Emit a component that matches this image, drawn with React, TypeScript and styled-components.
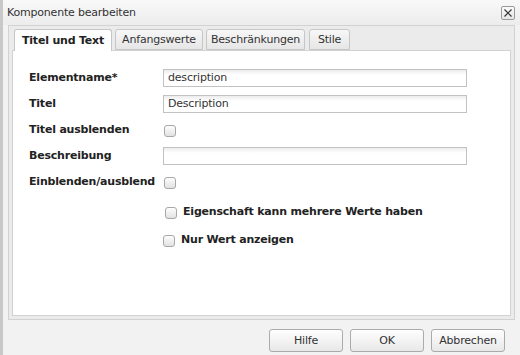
import React from "react";
import styled, { createGlobalStyle } from "styled-components";

const Global = createGlobalStyle`
  html, body { margin: 0; padding: 0; background: #f2f2f2; }
  body { font-family: "DejaVu Sans", Verdana, sans-serif; font-size: 11px; letter-spacing: -0.2px; color: #333; }
`;

const Window = styled.div`
  width: 520px;
  height: 355px;
  box-sizing: border-box;
  border-left: 3px solid #c8c8c8;
  background: #f2f2f2;
  display: flex;
  flex-direction: column;
  overflow: hidden;
`;

const TitleBar = styled.div`
  height: 25px;
  flex: none;
  display: flex;
  align-items: center;
  justify-content: space-between;
  padding: 0 5px 1px 4px;
  box-sizing: border-box;
  background: linear-gradient(#f9f9f9, #ececec);
`;

const Title = styled.span`
  font-size: 11px;
  color: #333;
`;

const CloseBtn = styled.div`
  width: 12px;
  height: 12px;
  border: 1px solid #9a9a9a;
  border-radius: 2px;
  background: linear-gradient(#fafafa, #e6e6e6);
  display: flex;
  align-items: center;
  justify-content: center;
  margin-top: 1px;
`;

const TabPanel = styled.div`
  margin: 0 5px;
  height: 295px;
  flex: none;
  box-sizing: border-box;
  border: 1px solid #d2d2d2;
  background: #ebebeb;
  padding: 0 3px 3px 3px;
  display: flex;
  flex-direction: column;
`;

const TabStrip = styled.div`
  display: flex;
  align-items: flex-end;
  gap: 3px;
  padding: 3px 0 0 2px;
  height: 24px;
  box-sizing: border-box;
  flex: none;
  position: relative;
  z-index: 1;
`;

const Tab = styled.div<{ $active?: boolean; $gap?: number; $w: number }>`
  width: ${(p) => p.$w}px;
  height: ${(p) => (p.$active ? 22 : 21)}px;
  margin-bottom: ${(p) => (p.$active ? -1 : 0)}px;
  margin-left: ${(p) => p.$gap ?? 0}px;
  box-sizing: border-box;
  border: 1px solid #c6c6c6;
  border-bottom: ${(p) => (p.$active ? "none" : "1px solid #c6c6c6")};
  border-radius: 3px 3px 0 0;
  background: ${(p) =>
    p.$active ? "linear-gradient(#fdfdfd, #ffffff)" : "linear-gradient(#f7f7f7, #e6e6e6)"};
  font-weight: ${(p) => (p.$active ? "bold" : "normal")};
  color: ${(p) => (p.$active ? "#222" : "#333")};
  display: flex;
  align-items: center;
  justify-content: center;
  white-space: nowrap;
  padding-bottom: ${(p) => (p.$active ? 1 : 0)}px;
`;

const Content = styled.div`
  flex: 1;
  background: #fff;
  border: 1px solid #d2d2d2;
  padding: 17px 0 0 16px;
  display: flex;
  flex-direction: column;
  gap: 7px;
`;

const Row = styled.div<{ $extra?: number }>`
  display: flex;
  align-items: center;
  height: 19px;
  margin-top: ${(p) => p.$extra ?? 0}px;
`;

const Label = styled.div`
  width: 134px;
  flex: none;
  font-weight: bold;
  color: #222;
  white-space: nowrap;
`;

const Input = styled.div`
  width: 304px;
  height: 18px;
  box-sizing: border-box;
  border: 1px solid #c2c2c2;
  background: linear-gradient(#ececec 0px, #ffffff 5px, #ffffff);
  padding: 0 4px;
  display: flex;
  align-items: center;
  color: #333;
`;

const Check = styled.div<{ $offset?: number }>`
  width: 12px;
  height: 12px;
  box-sizing: border-box;
  border: 1px solid #a8a8a8;
  border-radius: 3px;
  background: linear-gradient(#fdfdfd, #e2e2e2);
  margin-left: ${(p) => p.$offset ?? 1}px;
  margin-top: 3px;
  flex: none;
`;

const CheckLabel = styled.span`
  font-weight: bold;
  color: #222;
  margin-left: 6px;
`;

const Footer = styled.div`
  flex: 1;
  display: flex;
  justify-content: flex-end;
  align-items: flex-start;
  gap: 7px;
  padding: 9px 15px 0 0;
`;

const Button = styled.div`
  width: 74px;
  height: 23px;
  box-sizing: border-box;
  border: 1px solid #ababab;
  border-radius: 3px;
  background: linear-gradient(#fefefe, #e8e8e8);
  display: flex;
  align-items: center;
  justify-content: center;
  color: #333;
`;

export default function App() {
  return (
    <>
      <Global />
      <Window>
        <TitleBar>
          <Title>Komponente bearbeiten</Title>
          <CloseBtn>
            <svg width="8" height="8" viewBox="0 0 8 8">
              <path d="M0.5 0.5 L7.5 7.5 M7.5 0.5 L0.5 7.5" stroke="#333" strokeWidth="1.2" />
            </svg>
          </CloseBtn>
        </TitleBar>
        <TabPanel>
          <TabStrip>
            <Tab $active $w={98}>Titel und Text</Tab>
            <Tab $w={88}>Anfangswerte</Tab>
            <Tab $w={99}>Beschränkungen</Tab>
            <Tab $gap={1} $w={41}>Stile</Tab>
          </TabStrip>
          <Content>
            <Row>
              <Label>Elementname*</Label>
              <Input>description</Input>
            </Row>
            <Row>
              <Label>Titel</Label>
              <Input>Description</Input>
            </Row>
            <Row>
              <Label>Titel ausblenden</Label>
              <Check />
            </Row>
            <Row>
              <Label>Beschreibung</Label>
              <Input />
            </Row>
            <Row>
              <Label>Einblenden/ausblend</Label>
              <Check />
            </Row>
            <Row $extra={4}>
              <Label />
              <Check $offset={2} />
              <CheckLabel>Eigenschaft kann mehrere Werte haben</CheckLabel>
            </Row>
            <Row $extra={2}>
              <Label />
              <Check $offset={0} />
              <CheckLabel>Nur Wert anzeigen</CheckLabel>
            </Row>
          </Content>
        </TabPanel>
        <Footer>
          <Button>Hilfe</Button>
          <Button>OK</Button>
          <Button>Abbrechen</Button>
        </Footer>
      </Window>
    </>
  );
}
